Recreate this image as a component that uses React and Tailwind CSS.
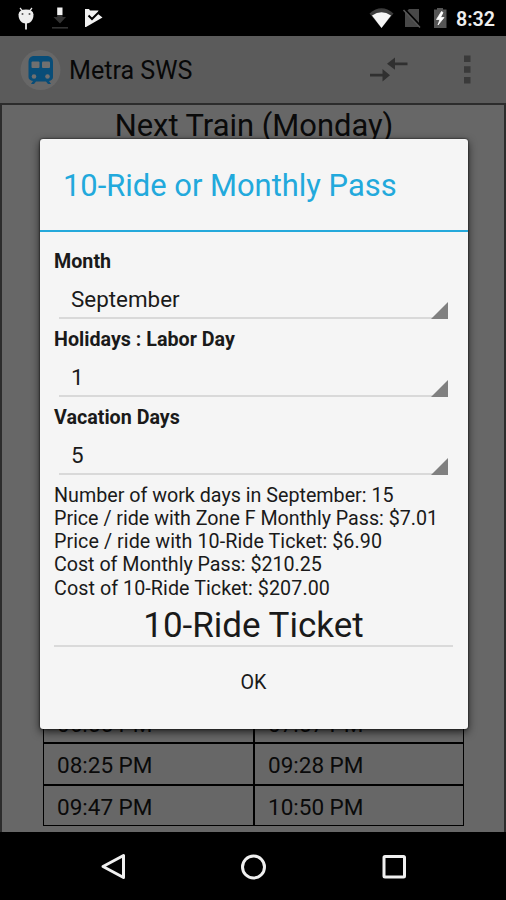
const rows = [
  ["06:55 PM", "07:57 PM"],
  ["08:25 PM", "09:28 PM"],
  ["09:47 PM", "10:50 PM"],
];

const summary = [
  { text: "Number of work days in September: 15", spacing: "tracking-normal" },
  { text: "Price / ride with Zone F Monthly Pass: $7.01", spacing: "tracking-[-0.02px]" },
  { text: "Price / ride with 10-Ride Ticket: $6.90", spacing: "tracking-[0.07px]" },
  { text: "Cost of Monthly Pass: $210.25", spacing: "tracking-[-0.03px]" },
  { text: "Cost of 10-Ride Ticket: $207.00", spacing: "tracking-[0.07px]" },
];

function StatusBar() {
  return (
    <div className="flex h-9 items-center bg-black">
      <svg className="h-9 w-[120px]" viewBox="0 0 120 36">
        <path d="M20 8l2.5 3M32 8l-2.5 3" stroke="#eee" strokeWidth="1.2" />
        <path d="M18.500 14.500Q19 9.500 26 9.500t7.500 5Q33.500 20 30 22.500q-4 2-8 0Q18.500 20 18.500 14.500z" fill="#eee" />
        <path d="M26 22v7.500" stroke="#eee" strokeWidth="1.8" />
        <circle cx="22.500" cy="14" r="1" fill="#555" />
        <circle cx="29.500" cy="14" r="1" fill="#555" />
        <path d="M57.200 7.500h5.300V15h-5.300z" fill="#f2f2f2" />
        <path d="M57.200 15h5.300v2H66L60 23.500 53.500 17h3.700z" fill="#333" />
        <path d="M52 27.800h16" stroke="#333" strokeWidth="1.600" />
        <path d="M85 9h4l1 1.500h8.500l-.5 3.500 4.500 3.500L86 27h-1z" fill="#f2f2f2" />
        <path d="M88.500 15.500l3.500 3.500 7.500-7.500" fill="none" stroke="#000" strokeWidth="2" />
      </svg>
      <svg className="ml-auto h-9 w-[90px]" viewBox="366 0 90 36">
        <path d="M369.500 13.500Q381.500 3 393.500 13.500L381.500 28z" fill="#3c3c3c" />
        <path d="M372 15.500Q381.500 9 391 15.500L381.500 28z" fill="#f5f5f5" />
        <path d="M409 9h10v18h-14V13z" fill="#484848" />
        <path d="M404.500 9l17 18" stroke="#000" strokeWidth="2" />
        <path d="M403.500 10l16.500 17.500" stroke="#555" strokeWidth="1.600" />
        <path d="M434 9.500h3V8h6v1.500h3.500V28H434z" fill="#555" />
        <path d="M441.500 11.500l-5 8h3.500l-2 5.500 6-7.500h-3.500l2.500-5z" fill="#fff" stroke="#fff" strokeWidth=".8" />
      </svg>
      <span className="w-[50px] pt-[3px] text-[19.700px] font-semibold leading-[33px] text-[#eee]">8:32</span>
    </div>
  );
}

function AppBar() {
  return (
    <div className="flex h-[67px] items-center bg-[#5b5b5b] pl-5">
      <svg className="h-[42px] w-[42px] shrink-0" viewBox="20 48 42 42">
        <circle cx="40.500" cy="69" r="20" fill="#676767" />
        <path d="M33 55h15q5 1 5 6v15q0 3-4 4l2 3h-3l-2-2.500H36L34 83h-3l2-3q-4.500-1-4.500-4V61q0-5 4.500-6z" fill="#084d78" />
        <rect x="31.500" y="60.500" width="8" height="6.500" rx="1" fill="#707070" />
        <rect x="42" y="60.500" width="8" height="6.500" rx="1" fill="#707070" />
        <circle cx="34" cy="75.500" r="2.300" fill="#707070" />
        <circle cx="47.500" cy="75.500" r="2.300" fill="#707070" />
      </svg>
      <span className="ml-[7px] pt-[2px] text-[25.100px] leading-[65px] text-[#080808]">Metra SWS</span>
      <svg className="ml-auto h-[67px] w-[136px]" viewBox="370 36 136 67">
        <path d="M370 75.200h13M394 63.800h13.500" stroke="#303030" strokeWidth="2.800" />
        <path d="M382.500 69l7.500 6.200-7.500 6.300zM395 57.500l-8 6.300 8 6z" fill="#303030" />
        <path d="M464 55.500h6.500V62H464zM464 66.200h6.500v6.500H464zM464 76.900h6.500v6.500H464z" fill="#3a3a3a" />
      </svg>
    </div>
  );
}

function Field({ label, value }) {
  return (
    <div className="h-[78px]">
      <div className="h-[24px] text-[19.700px] font-bold leading-[26px]">{label}</div>
      <div className="ml-[5px] mr-[5px] flex h-[46px] items-center justify-between border-b-2 border-[#d9d9d9] pl-3">
        <span className="mt-[8px] text-[22.400px] leading-[28px]">{value}</span>
        <svg className="-mb-[2px] h-[17px] w-[17px] self-end" viewBox="0 0 17 17">
          <path d="M17 0v17H0z" fill="#808080" />
        </svg>
      </div>
    </div>
  );
}

export default function App() {
  return (
    <div className="relative flex h-[900px] w-[506px] flex-col overflow-hidden bg-black font-['Roboto',sans-serif]">
      <StatusBar />
      <AppBar />
      <div className="flex h-[729px] flex-col justify-between border-x-2 border-t-2 border-[#2c2c2c] bg-[#676767] pb-[6px] text-[#0a0a0a]">
        <div className="pl-[2px] text-center text-[30.900px] leading-[42px]">Next Train (Monday)</div>
        <div className="ml-[41px] w-[421px] border border-black">
          {rows.map((row) => (
            <div key={row[0]} className="flex h-[41.500px] border-t-2 border-black text-[22.500px] leading-[42px]">
              <div className="w-[211px] border-r-2 border-black pl-[13px]">{row[0]}</div>
              <div className="pl-[13px]">{row[1]}</div>
            </div>
          ))}
        </div>
      </div>
      <div className="flex h-[68px] bg-black">
        <svg className="h-[68px] w-[506px]" viewBox="0 832 506 68" fill="none" stroke="#f0f0f0" strokeWidth="3">
          <path d="M123.500 855.500v22L103 866.500z" strokeLinejoin="round" />
          <circle cx="253.500" cy="867" r="11" />
          <rect x="384" y="856.500" width="20.500" height="20.500" rx="1" />
        </svg>
      </div>

      <div className="absolute left-[39.500px] top-[139px] h-[590px] w-[428px] rounded-[3px] bg-[#f5f5f5] text-[#1a1a1a] shadow-[0_3px_8px_rgba(0,0,0,0.7),0_0_2px_#000]">
        <div className="h-[93px] border-b-[2px] border-[#25a9db] pl-[23.500px] text-[30.900px] leading-[94px] text-[#22a9dc]">
          10-Ride or Monthly Pass
        </div>
        <div className="px-[14.500px] pt-[16.500px]">
          <Field label="Month" value="September" />
          <Field label="Holidays : Labor Day" value="1" />
          <Field label="Vacation Days" value="5" />
          <div className="pt-[1px] text-[19.700px] leading-[23.300px]">
            {summary.map((line) => (
              <div key={line.text} className={line.spacing}>{line.text}</div>
            ))}
          </div>
          <div className="h-[47px] border-b-2 border-[#dadada] text-center text-[35px] leading-[52px]">10-Ride Ticket</div>
          <div className="text-center text-[19.700px] leading-[71px]">OK</div>
        </div>
      </div>
    </div>
  );
}
